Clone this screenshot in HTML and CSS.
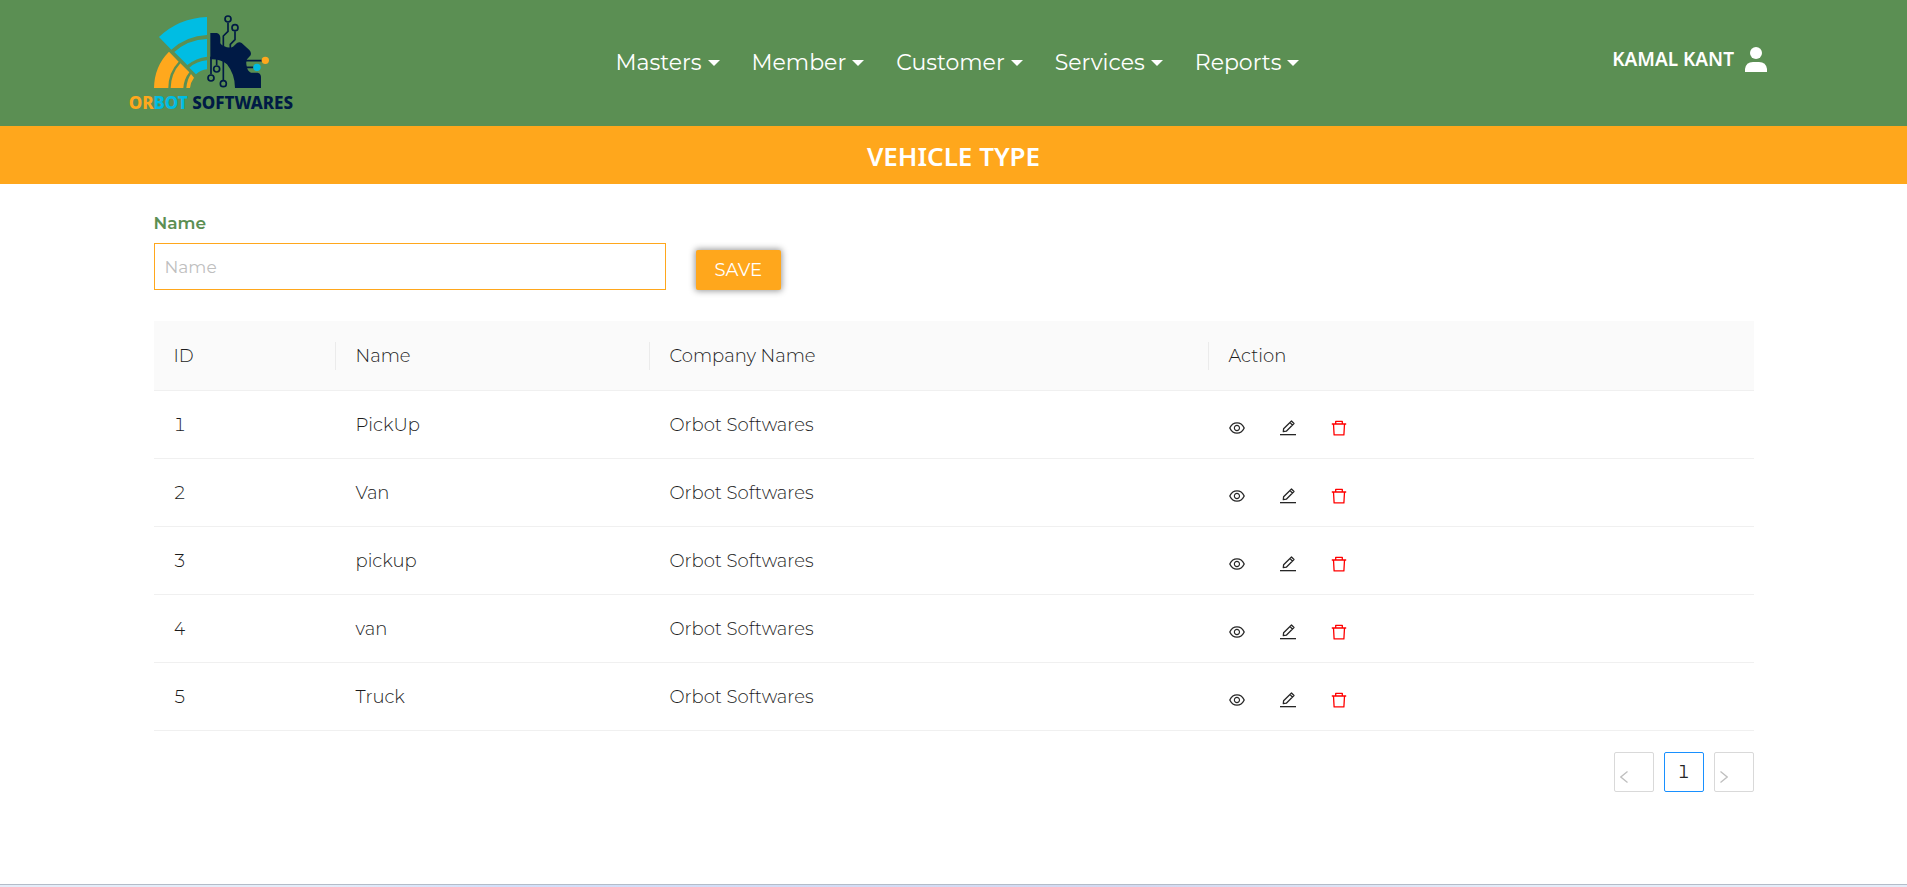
FILE: index.html
```html
<!DOCTYPE html>
<html lang="en">
<head>
<meta charset="utf-8">
<title>Vehicle Type</title>
<link rel="stylesheet" href="styles.css">
</head>
<body>
<svg class="sprite" aria-hidden="true">
  <symbol id="eye" viewBox="64 128 896 768"><path d="M942.2 486.2C847.4 286.5 704.1 186 512 186c-192.2 0-335.4 100.5-430.2 300.3a60.3 60.3 0 0 0 0 51.5C176.6 737.5 319.9 838 512 838c192.2 0 335.4-100.5 430.2-300.3 7.7-16.2 7.7-35 0-51.500zM512 766c-161.300 0-279.400-81.800-362.700-254C232.600 339.800 350.700 258 512 258c161.300 0 279.400 81.800 362.700 254C791.500 684.200 673.400 766 512 766zm-4-430c-97.200 0-176 78.800-176 176s78.800 176 176 176 176-78.800 176-176-78.800-176-176-176zm0 288c-61.900 0-112-50.100-112-112s50.100-112 112-112 112 50.100 112 112-50.100 112-112 112z"/></symbol>
  <symbol id="edit" viewBox="0 0 16 16"><path d="M0 14h16v1.300H0z"/><path d="M3.300 11.700 3.600 8.700 11.500 1l2.500 2.500-7.700 7.700z M10 2.600l2.400 2.400" fill="none" stroke="currentColor" stroke-width="1.300" stroke-linejoin="round"/></symbol>
  <symbol id="trash" viewBox="0 0 16 16"><path d="M.8 4h14.400M4.700 3.800V1.300h6.600v2.500M2.500 4l.6 10.900h9.800L13.500 4" fill="none" stroke="currentColor" stroke-width="1.300" stroke-linejoin="round"/></symbol>
</svg>

<header class="topbar">
  <a class="brand" href="#" aria-label="Orbot Softwares">
    <svg class="logo" viewBox="0 0 600 378">
      <g fill="#00bde3">
        <path d="M291 51V105Q229 108 184 149L147 111Q207 54 291 51Z"/>
        <path d="M291 117V170Q258 174 232 195L193 156Q234 119 291 117Z"/>
        <path d="M291 181V208Q272 210 258 223L238 203Q261 183 291 181Z"/>
      </g>
      <g fill="#ffa81d">
        <path d="M177 155 206 185Q175 217 175 264H132Q133 199 177 155Z"/>
        <path d="M211 190 238 217Q222 237 220 264H182Q183 221 211 190Z"/>
        <path d="M243 222 252 233Q242 246 240 264H229Q231 239 243 222Z"/>
      </g>
      <path fill="#001a45" d="M301 99H320Q330 101 331 113V130Q334 136 343 139Q357 146 369 140L381 129Q388 125 395 129L418 150Q425 157 422 166L411 178Q407 186 410 198Q413 215 423 218H443Q452 219 453 230V264H375Q375 223 351 193Q332 177 301 178Z"/>
      <g fill="none" stroke="#001a45" stroke-width="5">
        <path d="M354 68V94L340 108V145M375 94V119L361 133V145M303 170V223M320 175V196M340 180V240M405 182H456M405 202H430"/>
        <circle cx="354" cy="57" r="9"/><circle cx="375" cy="83" r="9"/>
        <circle cx="303" cy="234" r="9"/><circle cx="320" cy="207" r="9"/><circle cx="340" cy="251" r="9"/>
      </g>
      <circle cx="466" cy="181" r="11" fill="#ffa81d"/><circle cx="441" cy="202" r="11" fill="#00bde3"/>
      <text class="logo-text" x="56" y="326"><tspan fill="#ffa81d">OR</tspan><tspan fill="#00bde3">BOT</tspan><tspan fill="#001a45"> SOFTWARES</tspan></text>
    </svg>
  </a>
  <nav class="menu">
    <button class="menu-item" type="button">Masters</button>
    <button class="menu-item" type="button">Member</button>
    <button class="menu-item" type="button">Customer</button>
    <button class="menu-item" type="button">Services</button>
    <button class="menu-item" type="button">Reports</button>
  </nav>
  <a class="user" href="#">KAMAL KANT
    <svg class="user-icon" viewBox="0 0 22 25"><circle cx="11" cy="6" r="6"/><path d="M0 25V22Q1 15 8 15H14Q21 15 22 22V25Z"/></svg>
  </a>
</header>
<h1 class="title">VEHICLE TYPE</h1>

<main class="content">
  <form class="form">
    <div class="field">
      <label class="label" for="name">Name</label>
      <input class="input" id="name" type="text" placeholder="Name">
    </div>
    <button class="save" type="button">SAVE</button>
  </form>

  <table class="table">
    <colgroup><col class="c-id"><col class="c-name"><col class="c-company"><col></colgroup>
    <thead><tr><th>ID</th><th>Name</th><th>Company Name</th><th>Action</th></tr></thead>
    <tbody>
      <tr><td>1</td><td>PickUp</td><td>Orbot Softwares</td><td><div class="actions"><button class="act" type="button" aria-label="View"><svg><use href="#eye"/></svg></button><button class="act" type="button" aria-label="Edit"><svg><use href="#edit"/></svg></button><button class="act danger" type="button" aria-label="Delete"><svg><use href="#trash"/></svg></button></div></td></tr>
      <tr><td>2</td><td>Van</td><td>Orbot Softwares</td><td><div class="actions"><button class="act" type="button" aria-label="View"><svg><use href="#eye"/></svg></button><button class="act" type="button" aria-label="Edit"><svg><use href="#edit"/></svg></button><button class="act danger" type="button" aria-label="Delete"><svg><use href="#trash"/></svg></button></div></td></tr>
      <tr><td>3</td><td>pickup</td><td>Orbot Softwares</td><td><div class="actions"><button class="act" type="button" aria-label="View"><svg><use href="#eye"/></svg></button><button class="act" type="button" aria-label="Edit"><svg><use href="#edit"/></svg></button><button class="act danger" type="button" aria-label="Delete"><svg><use href="#trash"/></svg></button></div></td></tr>
      <tr><td>4</td><td>van</td><td>Orbot Softwares</td><td><div class="actions"><button class="act" type="button" aria-label="View"><svg><use href="#eye"/></svg></button><button class="act" type="button" aria-label="Edit"><svg><use href="#edit"/></svg></button><button class="act danger" type="button" aria-label="Delete"><svg><use href="#trash"/></svg></button></div></td></tr>
      <tr><td>5</td><td>Truck</td><td>Orbot Softwares</td><td><div class="actions"><button class="act" type="button" aria-label="View"><svg><use href="#eye"/></svg></button><button class="act" type="button" aria-label="Edit"><svg><use href="#edit"/></svg></button><button class="act danger" type="button" aria-label="Delete"><svg><use href="#trash"/></svg></button></div></td></tr>
    </tbody>
  </table>

  <nav class="pager" aria-label="Pages">
    <button class="page step" type="button" aria-label="Previous"><svg viewBox="0 0 8 12"><path d="M7.500 .5 .8 6l6.700 5.500"/></svg></button>
    <button class="page current" type="button">1</button>
    <button class="page step" type="button" aria-label="Next"><svg viewBox="0 0 8 12"><path d="M.5 .5 7.200 6 .5 11.500"/></svg></button>
  </nav>
</main>
<footer class="footer"></footer>
</body>
</html>
```

FILE: styles.css
```css
* { box-sizing: border-box; }

body {
  margin: 0;
  min-height: 100vh;
  display: flex;
  flex-direction: column;
  background: #fff;
  color: #1c1c1c;
  font-family: Montserrat, Inter, sans-serif;
  font-size: 18px;
  font-weight: 300;
  line-height: 28px;
}

button, input { font: inherit; }
button { cursor: pointer; }
.sprite { display: none; }

.topbar {
  display: grid;
  grid-template-columns: 1fr auto 1fr;
  align-items: center;
  padding: 0 110px;
  background: #5b8f53;
}
.brand, .logo { display: block; }
.logo { width: 200px; height: 126px; }
.logo-text { font-family: "Noto Sans", sans-serif; font-size: 51px; font-weight: 800; }

.menu { display: flex; gap: 32px; padding-left: 8px; }
.menu-item {
  display: flex;
  align-items: center;
  gap: 6px;
  padding: 0;
  border: 0;
  background: none;
  color: #fff;
  font-size: 22px;
  font-weight: 400;
}
.menu-item::after {
  content: "";
  border: 6px solid transparent;
  border-top-color: #fff;
  border-bottom: 0;
}

.user {
  display: flex;
  align-items: center;
  justify-self: end;
  gap: 11px;
  margin-right: 30px;
  padding-bottom: 8px;
  color: #fff;
  font-family: "Noto Sans", sans-serif;
  font-size: 19px;
  font-weight: 600;
  text-decoration: none;
}
.user-icon { width: 22px; height: 25px; fill: #fff; }

.title {
  margin: 0;
  padding: 13px 12px 11px;
  background: #ffa71c;
  color: #fff;
  font-family: "Noto Sans", sans-serif;
  font-size: 26px;
  font-weight: 600;
  line-height: 34px;
  text-align: center;
}

.content { width: 84%; max-width: 1600px; margin: 0 auto; padding-top: 25px; }

.form { display: flex; align-items: flex-end; gap: 30px; margin-bottom: 31px; }
.field { width: 32%; }
.label { display: block; margin-bottom: 6px; color: #5b8f53; font-weight: 600; font-size: 17px; }
.input {
  display: block;
  width: 100%;
  height: 47px;
  padding: 0 10px;
  border: 1px solid #ffa71c;
  border-radius: 0;
  background: #fff;
  font-size: 17px;
  font-weight: 400;
}
.input::placeholder { color: #bfbfbf; opacity: 1; }
.save {
  height: 40px;
  padding: 0 19px;
  border: 0;
  border-radius: 2px;
  background: #ffa71c;
  box-shadow: 0 0 6px 1px #999;
  color: #fff;
  font-weight: 400;
}

.table { width: 100%; border-collapse: separate; border-spacing: 0; table-layout: fixed; font-feature-settings: "tnum"; }
.c-id { width: 182px; }
.c-name { width: 314px; }
.c-company { width: 559px; }
.table th, .table td {
  height: 68px;
  padding: 0 20px;
  border-bottom: 1px solid #f0f0f0;
  text-align: left;
}
.table th {
  height: 70px;
  background: linear-gradient(#ebebeb, #ebebeb) right center / 1px 28px no-repeat #fafafa;
  font-weight: 300;
}
.table th:last-child { background: #fafafa; }

.actions { display: flex; gap: 35px; padding-top: 7px; }
.act { display: block; padding: 0; border: 0; background: none; color: #262626; }
.act svg { display: block; width: 16px; height: 16px; fill: currentColor; }
.act.danger { color: #f00; }

.pager { display: flex; justify-content: flex-end; gap: 10px; margin-top: 21px; font-feature-settings: "tnum"; }
.page {
  display: flex;
  align-items: center;
  justify-content: center;
  width: 40px;
  height: 40px;
  padding: 0;
  border: 1px solid #d9d9d9;
  border-radius: 2px;
  background: #fff;
  color: #262626;
  font-feature-settings: inherit;
}
.current { border-color: #1890ff; font-weight: 400; }
.step { justify-content: flex-start; padding: 9px 0 0 5px; }
.step svg { width: 8px; height: 12px; fill: none; stroke: #bfbfbf; stroke-width: 1.300; }

.footer {
  height: 3px;
  margin-top: auto;
  border-top: 1px solid #b4bcc8;
  background: linear-gradient(90deg, #e4edf9 17%, #d2e0fa 26%, #d3d9f1 60%, #e4edf9 80%);
}
```
